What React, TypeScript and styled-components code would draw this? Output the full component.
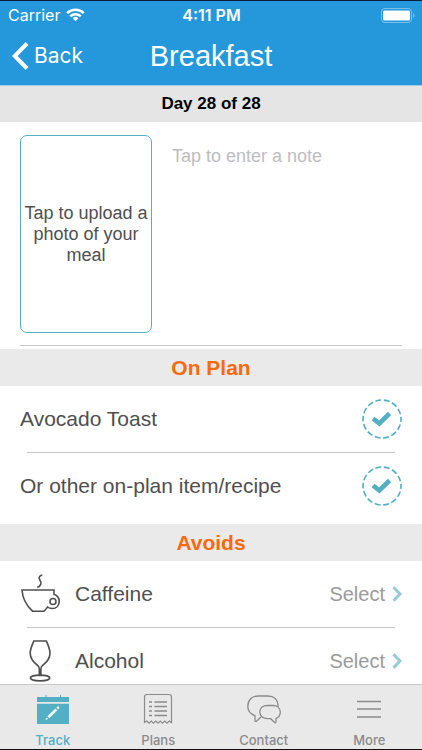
import React, { useState } from "react";
import styled, { createGlobalStyle } from "styled-components";

const teal = "#53afc3";
const ink = "#4f4f4f";
const tabGrey = "#8b8b8b";

const GlobalStyle = createGlobalStyle`
  *, *::before, *::after { box-sizing: border-box; }
  body { margin: 0; background: #fff; }
  button, input, textarea { font: inherit; color: inherit; }
  svg { display: block; flex: none; }
`;

const Screen = styled.div`
  display: flex;
  flex-direction: column;
  height: 100vh;
  border-top: 1px solid #0b1c3c;
  border-bottom: 1px solid #111;
  background: #fff;
  color: ${ink};
  font-family: "Liberation Sans", Arial, sans-serif;
  font-size: 21px;
  line-height: 24px;
`;

const Header = styled.header`
  flex: none;
  padding-bottom: 2px;
  background: #2498da;
  color: #fff;
  border-bottom: 1px solid #a3cbe6;
`;

const StatusBar = styled.div`
  display: grid;
  grid-template-columns: 1fr auto 1fr;
  align-items: center;
  height: 28px;
  padding: 0 7px 0 8px;
  font-family: Inter, sans-serif;
  font-size: 16px;
`;

const Carrier = styled.div`
  display: flex;
  align-items: center;
  gap: 6px;
`;

const Clock = styled.time`
  font-weight: 600;
`;

const Battery = styled.div`
  justify-self: end;
`;

const NavBar = styled.div`
  display: grid;
  grid-template-columns: 1fr auto 1fr;
  align-items: center;
  height: 54px;
  padding: 0 12px;
`;

const BackButton = styled.button`
  display: flex;
  align-items: center;
  justify-self: start;
  gap: 5px;
  padding: 0;
  border: 0;
  background: none;
  font-family: Inter, sans-serif;
  font-size: 21px;
  cursor: pointer;
`;

const Title = styled.h1`
  margin: 0;
  font-size: 29px;
  line-height: 32px;
  font-weight: 400;
`;

const DayBar = styled.div`
  flex: none;
  height: 36px;
  background: #e5e5e5;
  color: #000;
  font-size: 17px;
  line-height: 36px;
  font-weight: 700;
  text-align: center;
`;

const Content = styled.main`
  flex: 1;
  min-height: 0;
  overflow-y: auto;
  scrollbar-width: none;
`;

const MealEntry = styled.section`
  display: flex;
  gap: 20px;
  margin: 0 20px 3px;
  padding: 13px 0 12px;
  border-bottom: 1px solid #c6c6c6;
`;

const PhotoButton = styled.button`
  flex: none;
  width: 132px;
  height: 198px;
  padding: 0;
  border: 1px solid ${teal};
  border-radius: 7px;
  background: #fff;
  font-size: 18px;
  line-height: 21px;
  cursor: pointer;
`;

const Note = styled.textarea`
  flex: 1;
  min-width: 0;
  padding: 9px 0;
  border: 0;
  outline: 0;
  resize: none;
  background: none;
  font-size: 18px;
  line-height: 24px;
  &::placeholder { color: #bdbdc2; opacity: 1; }
`;

const Section = styled.section`
  margin-bottom: 5px;
`;

const SectionTitle = styled.h2`
  margin: 0;
  height: 37px;
  background: #eaeaea;
  color: #f96a0c;
  font-size: 21px;
  line-height: 37px;
  font-weight: 700;
  text-align: center;
`;

const List = styled.ul`
  margin: 0;
  padding: 0;
  list-style: none;
`;

const Item = styled.li`
  &:not(:last-child)::after {
    content: "";
    display: block;
    height: 1px;
    margin: 0 27px;
    background: #c6c6c6;
  }
`;

const CheckRow = styled.label`
  display: flex;
  align-items: center;
  justify-content: space-between;
  height: 66px;
  padding: 0 20px;
  cursor: pointer;
`;

const CheckHolder = styled.span`
  display: grid;
  place-items: center;
  & > * { grid-area: 1 / 1; }
`;

const CheckInput = styled.input`
  appearance: none;
  width: 40px;
  height: 40px;
  margin: 0;
  border-radius: 50%;
  cursor: pointer;
`;

const CheckArt = styled.svg`
  pointer-events: none;
`;

const SelectRow = styled.button`
  display: flex;
  align-items: center;
  width: 100%;
  height: 66px;
  padding: 0 20px;
  border: 0;
  background: none;
  text-align: left;
  cursor: pointer;
`;

const AvoidName = styled.span`
  flex: 1;
  margin-left: 15px;
`;

const SelectHint = styled.span`
  display: flex;
  align-items: center;
  gap: 7px;
  color: #9b9b9b;
  font-size: 20px;
`;

const TabBar = styled.nav`
  flex: none;
  display: grid;
  grid-template-columns: repeat(4, 1fr);
  height: 65px;
  border-top: 1px solid #c9c9c9;
  background: #e9e9e9;
`;

const Tab = styled.a<{ $active?: boolean }>`
  display: flex;
  flex-direction: column;
  align-items: center;
  gap: 6px;
  padding-top: 7px;
  color: ${({ $active }) => ($active ? teal : tabGrey)};
  font-family: Inter, sans-serif;
  font-size: 13px;
  line-height: 16px;
  font-weight: 500;
  text-decoration: none;
`;

const WifiIcon = () => (
  <svg width="19" height="14" viewBox="0 0 19 14" fill="none" stroke="#fff" strokeWidth="2.5" aria-hidden="true">
    <path d="M1.2 5.1a11.8 11.8 0 0 1 16.6 0" />
    <path d="M4.3 8.3a7.4 7.4 0 0 1 10.4 0" />
    <path d="M9.5 13.2l-2.9-3a4.1 4.1 0 0 1 5.8 0z" fill="#fff" stroke="none" />
  </svg>
);

const BatteryIcon = () => (
  <svg width="34" height="15" viewBox="0 0 34 15" aria-hidden="true">
    <rect x=".5" y=".5" width="30" height="14" rx="3.5" fill="none" stroke="#7cc0ea" />
    <rect x="2" y="2.500" width="27" height="10" rx="1.500" fill="#fff" />
    <path d="M32 5c2 .8 2 4.200 0 5z" fill="#7cc0ea" />
  </svg>
);

const BackIcon = () => (
  <svg width="17" height="28" viewBox="0 0 17 28" fill="none" stroke="#fff" strokeWidth="4" aria-hidden="true">
    <path d="M15 1.500L2.700 14 15 26.500" />
  </svg>
);

const CheckMark = ({ on }: { on: boolean }) => (
  <CheckArt width="40" height="40" viewBox="0 0 40 40" fill="none" stroke={teal} aria-hidden="true">
    <circle cx="20" cy="20" r="19" strokeWidth="1.600" strokeDasharray="5.900 2.627" strokeDashoffset="2.950" />
    {on && <path d="M11 19.500l6.300 5L27.500 14.500" strokeWidth="4.600" />}
  </CheckArt>
);

const CupIcon = () => (
  <svg width="40" height="40" viewBox="0 0 40 40" fill="none" stroke={ink} strokeWidth="1.600" aria-hidden="true">
    <path d="M22.300 1c-3.500.8-3.800 3-2.300 5.200s1.700 5.600-2.800 7.300" />
    <path d="M2 16h32v4.300c8 3.200 6 14.200-1.500 14.200-2 0-3.500-.3-5-1.500-1 2-2.300 3-3.500 4.200H12.500C6 31 2.500 25 2 16z" />
    <circle cx="33" cy="27.500" r="3" />
  </svg>
);

const GlassIcon = () => (
  <svg width="40" height="42" viewBox="0 0 40 42" fill="none" stroke={ink} strokeWidth="1.600" aria-hidden="true">
    <path d="M13.800 1h12.600c2 4.500 3.600 8 3.600 12 0 6.500-4.200 9.500-8 13-.9.900-1.100 2-1.100 3.500v6h-1.600v-6c0-1.500-.2-2.600-1.100-3.500C14.400 22.500 10.200 19.500 10.200 13c0-4 1.600-7.500 3.600-12z" />
    <ellipse cx="20.100" cy="38" rx="9.700" ry="2.900" />
  </svg>
);

const ChevronIcon = () => (
  <svg width="10" height="16" viewBox="0 0 10 16" fill="none" stroke="#96cad6" strokeWidth="3" aria-hidden="true">
    <path d="M1.500 1.200L8 8l-6.500 6.800" />
  </svg>
);

const TrackIcon = () => (
  <svg width="34" height="34" viewBox="0 0 34 34" aria-hidden="true">
    <path fill={teal} d="M1 5h8.500V3H10.500v2h13.500V3h1v2h8v5H1zM1 11.800h32V32H1z" />
    <path d="M12.300 25.300L20.300 17.500" stroke="#f2f8fa" strokeWidth="2.700" />
    <path d="M9.300 28l1.200-2.600 1.600 1.600zM20.300 15.800l1.200-1.200c1-.8 2.400.7 1.700 1.700L22 17.500z" fill="#f2f8fa" />
  </svg>
);

const PlansIcon = () => (
  <svg width="34" height="34" viewBox="0 0 34 34" fill="none" stroke={tabGrey} strokeWidth="1.200" aria-hidden="true">
    <path d="M3.500 30.500V5c0-1.500.8-2.500 2.500-2.500h22c1.700 0 2.500 1 2.500 2.500v25.500l-2.200-1.500-2.300 2.200-2.200-2.200-2.300 2.200-2.200-2.200-2.300 2.200-2.200-2.200-2.300 2.200-2.200-2.200-2.300 2.200L5.800 29z" />
    <path d="M8 10h3M13.500 10H26M8 14.500h3M13.500 14.500H26M8 19h3M13.500 19H26M8 23.500h3M13.500 23.500H26" strokeWidth="1.400" />
  </svg>
);

const ContactIcon = () => (
  <svg width="34" height="34" viewBox="0 0 34 34" fill="none" stroke={tabGrey} strokeWidth="1.300" aria-hidden="true">
    <path d="M14 25l-4.500 4.300c-.8.400-1.500 0-1.500-.8v-4.800C3.500 22 .8 18.500.8 14.500.8 8 5 4 11 4h10c5.800 0 9.800 3.500 10 9.500v1.200" />
    <path d="M20.500 13.500H26c4.500 0 7.300 2.800 7.300 6.500 0 3-1.600 5.400-4.300 6.400v3.400c0 .9-.8 1.300-1.500.7l-3.700-3.800h-3.300c-4.700 0-7.700-2.900-7.700-6.700s3-6.500 7.700-6.500z" />
  </svg>
);

const MoreIcon = () => (
  <svg width="34" height="34" viewBox="0 0 34 34" stroke={tabGrey} strokeWidth="1.400" aria-hidden="true">
    <path d="M5 9.500h24M5 17h24M5 25h24" />
  </svg>
);

const avoids = [
  { name: "Caffeine", Icon: CupIcon },
  { name: "Alcohol", Icon: GlassIcon },
];

const tabs = [
  { name: "Track", Icon: TrackIcon, active: true },
  { name: "Plans", Icon: PlansIcon },
  { name: "Contact", Icon: ContactIcon },
  { name: "More", Icon: MoreIcon },
];

function CheckItem({ name }: { name: string }) {
  const [on, setOn] = useState(true);
  return (
    <Item>
      <CheckRow>
        {name}
        <CheckHolder>
          <CheckInput type="checkbox" checked={on} onChange={(e) => setOn(e.target.checked)} />
          <CheckMark on={on} />
        </CheckHolder>
      </CheckRow>
    </Item>
  );
}

export default function App() {
  return (
    <Screen>
      <GlobalStyle />
      <Header>
        <StatusBar>
          <Carrier>Carrier <WifiIcon /></Carrier>
          <Clock>4:11 PM</Clock>
          <Battery><BatteryIcon /></Battery>
        </StatusBar>
        <NavBar>
          <BackButton type="button"><BackIcon />Back</BackButton>
          <Title>Breakfast</Title>
        </NavBar>
      </Header>
      <DayBar>Day 28 of 28</DayBar>
      <Content>
        <MealEntry>
          <PhotoButton type="button">Tap to upload a photo of your meal</PhotoButton>
          <Note aria-label="Note" placeholder="Tap to enter a note" />
        </MealEntry>
        <Section>
          <SectionTitle>On Plan</SectionTitle>
          <List>
            <CheckItem name="Avocado Toast" />
            <CheckItem name="Or other on-plan item/recipe" />
          </List>
        </Section>
        <Section>
          <SectionTitle>Avoids</SectionTitle>
          <List>
            {avoids.map(({ name, Icon }) => (
              <Item key={name}>
                <SelectRow type="button">
                  <Icon />
                  <AvoidName>{name}</AvoidName>
                  <SelectHint>Select<ChevronIcon /></SelectHint>
                </SelectRow>
              </Item>
            ))}
          </List>
        </Section>
      </Content>
      <TabBar aria-label="Main">
        {tabs.map(({ name, Icon, active }) => (
          <Tab key={name} href={`#${name.toLowerCase()}`} $active={active} aria-current={active ? "page" : undefined}>
            <Icon />
            {name}
          </Tab>
        ))}
      </TabBar>
    </Screen>
  );
}
